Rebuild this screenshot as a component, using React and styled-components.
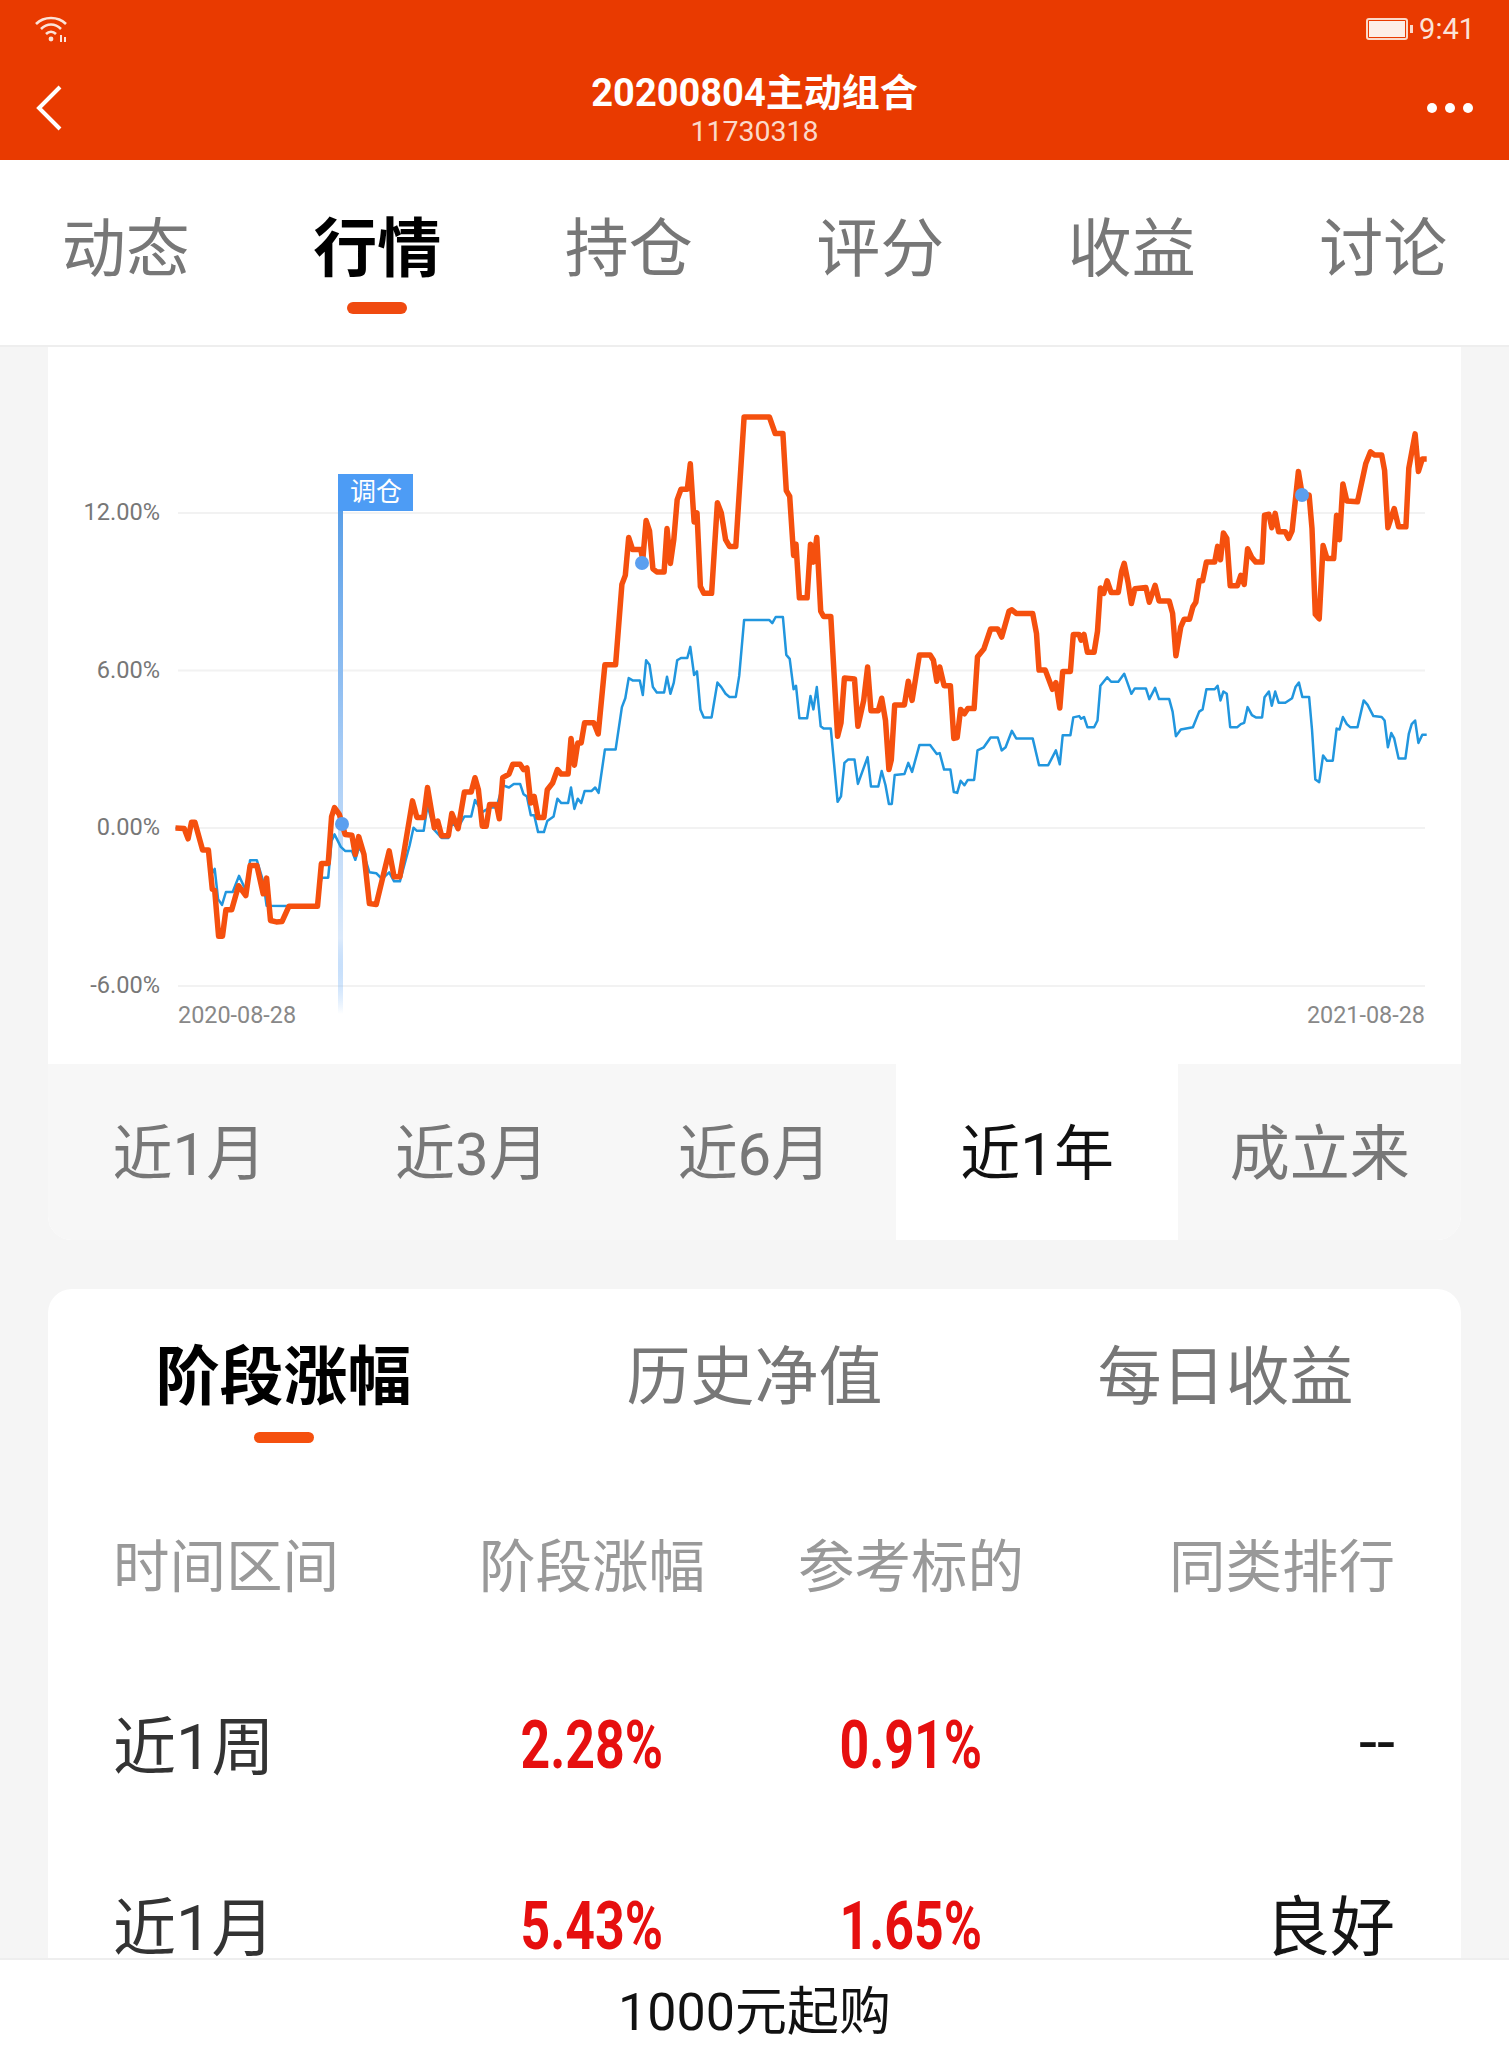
import styled, { createGlobalStyle } from "styled-components";

const GlobalStyle = createGlobalStyle`
  html, body {
    margin: 0;
    padding: 0;
    background: #f5f5f5;
  }
  body {
    font-family: Roboto, "Noto Sans CJK SC", sans-serif;
  }
`;

// traced points, left and right half of the chart
const leftX = (x) => x / 2.063;
const rightX = (x) => 750 + x / 2.066;
const toY = (y) => 350 + y / 2.24;

const toPoints = (left, right) => {
  const out = [];
  for (let i = 0; i < left.length; i += 2) {
    out.push(`${leftX(left[i]).toFixed(1)},${toY(left[i + 1]).toFixed(1)}`);
  }
  for (let i = 0; i < right.length; i += 2) {
    out.push(`${rightX(right[i]).toFixed(1)},${toY(right[i + 1]).toFixed(1)}`);
  }
  return out.join(" ");
};

const orangeLeft = [
  362,1071,380,1072,388,1095,395,1058,402,1058,418,1120,430,1120,438,1208,443,1210,451,1313,459,1313,466,1254,478,1254,492,1200,507,1222,516,1155,530,1155,543,1218,550,1183,558,1278,570,1281,582,1280,596,1246,655,1246,663,1150,677,1150,684,1045,690,1025,700,1040,712,1085,726,1087,733,1130,740,1090,751,1130,762,1240,776,1242,803,1122,813,1180,825,1180,851,1010,860,1047,874,1047,882,980,896,1070,903,1055,911,1088,925,1088,932,1038,945,1072,958,990,972,990,980,958,987,985,995,1067,1003,1067,1010,1018,1024,1018,1030,1050,1037,958,1050,950,1058,928,1073,928,1080,940,1087,936,1095,1015,1102,1000,1110,1047,1122,1047,1129,985,1140,970,1150,940,1158,950,1172,950,1178,870,1185,930,1192,880,1199,880,1206,835,1225,835,1234,860,1248,705,1270,705,1283,525,1290,505,1297,420,1305,447,1322,447,1326,470,1333,382,1340,405,1347,490,1355,497,1370,497,1376,400,1383,478,1390,425,1397,335,1405,312,1418,312,1424,255,1432,385,1438,365,1445,530,1452,545,1468,545,1480,342,1488,365,1497,425,1505,440,1518,440,1535,150,1568,150,
];

const orangeRight = [
  0,150,40,150,52,187,68,187,75,315,82,328,90,460,95,435,102,555,118,555,125,435,131,475,138,420,146,585,152,597,167,597,181,865,188,835,195,735,216,737,223,843,235,785,243,710,250,808,265,808,272,780,280,830,287,940,292,918,299,795,319,795,327,742,335,785,350,683,372,683,379,695,386,742,392,710,401,752,414,752,421,870,428,868,435,805,443,815,450,803,463,803,470,687,483,670,497,625,512,625,520,643,535,585,541,582,550,590,584,590,592,635,597,717,610,717,625,760,632,745,640,802,646,720,662,720,668,637,680,637,684,650,690,637,697,677,711,677,718,630,724,533,731,545,738,517,746,543,761,543,768,495,773,478,781,520,788,568,795,535,818,532,825,565,837,527,845,562,866,562,873,590,880,685,890,620,897,603,908,603,915,575,921,565,928,517,935,517,943,475,960,475,966,440,972,470,978,410,985,422,992,528,1007,528,1014,505,1021,525,1028,445,1037,465,1045,475,1058,475,1063,370,1072,368,1078,398,1085,366,1092,407,1106,407,1113,422,1120,405,1133,272,1141,325,1155,325,1161,400,1168,592,1176,602,1184,438,1192,467,1206,467,1212,370,1218,425,1225,300,1233,338,1255,340,1272,255,1282,228,1290,235,1305,235,1311,270,1318,398,1331,355,1340,396,1355,396,1361,265,1374,188,1381,272,1389,244,1398,244,
];

const blueLeft = [
  362,1071,380,1072,388,1095,395,1058,402,1058,418,1120,430,1120,436,1175,443,1162,450,1230,458,1243,466,1214,480,1214,493,1178,507,1210,516,1143,530,1143,543,1190,550,1245,655,1246,663,1182,677,1182,684,1100,690,1085,703,1113,712,1122,726,1122,733,1142,740,1115,751,1130,762,1170,776,1172,788,1185,803,1170,813,1190,825,1190,845,1110,853,1070,860,1077,874,1077,882,1020,896,1075,911,1093,925,1093,932,1060,945,1070,958,1045,972,1045,980,1008,995,1035,1010,1025,1024,1025,1037,975,1050,980,1060,972,1073,972,1080,995,1087,1000,1095,1042,1102,1042,1110,1080,1122,1080,1129,1055,1142,1045,1150,1005,1158,1015,1172,1015,1178,980,1185,1028,1192,1005,1199,1015,1206,988,1220,988,1228,980,1235,992,1248,895,1270,895,1283,800,1290,780,1297,735,1305,740,1320,740,1326,773,1333,695,1340,705,1347,755,1355,767,1370,767,1376,732,1383,770,1390,745,1397,695,1405,690,1418,690,1424,665,1432,728,1438,720,1445,805,1452,823,1468,823,1480,745,1488,755,1497,770,1505,777,1518,777,1525,730,1535,605,1568,605,
];

const blueRight = [
  0,605,40,605,46,612,53,598,68,598,75,683,82,692,90,760,95,752,102,825,118,825,125,775,131,805,138,755,146,843,152,848,167,848,181,1012,188,1000,195,925,203,917,216,917,223,972,243,912,250,978,265,978,272,943,280,975,287,1017,293,1017,299,952,319,950,327,925,335,945,350,885,372,885,386,905,392,903,401,940,414,940,421,990,428,992,435,965,443,975,450,963,463,963,470,897,483,890,497,868,512,868,520,897,528,890,541,853,550,870,584,870,597,930,616,930,632,897,640,928,646,863,662,863,668,823,680,820,684,826,690,822,697,845,711,845,718,830,724,752,738,733,746,743,761,743,773,725,788,770,795,758,818,758,825,782,837,757,845,782,866,782,873,810,880,865,890,850,915,845,928,810,935,805,943,760,960,760,966,752,972,785,978,765,985,770,992,845,1007,845,1014,838,1021,835,1028,800,1037,818,1045,823,1058,823,1063,778,1072,765,1078,797,1085,765,1092,790,1106,790,1120,780,1127,755,1134,745,1141,777,1155,777,1161,850,1168,962,1176,968,1184,908,1192,920,1204,920,1212,848,1218,850,1225,822,1233,838,1240,845,1255,845,1268,785,1276,795,1288,820,1305,822,1311,830,1318,890,1325,858,1331,870,1340,915,1354,915,1361,860,1367,838,1374,830,1381,880,1389,862,1398,862,
];

const gridLines = [
  { label: "12.00%", y: 513 },
  { label: "6.00%", y: 670.5 },
  { label: "0.00%", y: 828 },
  { label: "-6.00%", y: 986 },
];

const mainTabs = ["动态", "行情", "持仓", "评分", "收益", "讨论"];
const ranges = ["近1月", "近3月", "近6月", "近1年", "成立来"];
const subTabs = ["阶段涨幅", "历史净值", "每日收益"];
const rows = [
  { name: "近1周", gain: "2.28%", ref: "0.91%", rank: "--" },
  { name: "近1月", gain: "5.43%", ref: "1.65%", rank: "良好" },
];

const Chart = () => (
  <ChartSvg viewBox="48 347 1413 717">
    <defs>
      <linearGradient id="flagLine" x1="0" y1="0" x2="0" y2="1">
        <stop offset="0" stopColor="#5a9fe8" />
        <stop offset="0.5" stopColor="#a9cdf6" />
        <stop offset="0.85" stopColor="#dceafb" />
        <stop offset="1" stopColor="#4d9cf5" stopOpacity="0" />
      </linearGradient>
    </defs>
    {gridLines.map((line) => (
      <g key={line.label}>
        <line x1="178" x2="1425" y1={line.y} y2={line.y} stroke="#f2f2f2" strokeWidth="2" />
        <AxisText x="160" y={line.y + 7} textAnchor="end">
          {line.label}
        </AxisText>
      </g>
    ))}
    <DateText x="178" y="1023">2020-08-28</DateText>
    <DateText x="1425" y="1023" textAnchor="end">2021-08-28</DateText>
    <rect x="338" y="511" width="5" height="503" fill="url(#flagLine)" />
    <polyline points={toPoints(blueLeft, blueRight)} fill="none" stroke="#2196de" strokeWidth="2.5" strokeLinejoin="round" />
    <polyline points={toPoints(orangeLeft, orangeRight)} fill="none" stroke="#f5500e" strokeWidth="5.5" strokeLinejoin="round" />
    <rect x="338" y="474" width="75" height="37" fill="#4d9cf5" />
    <FlagText x="376" y="501" textAnchor="middle">调仓</FlagText>
    <circle cx="342" cy="824" r="7" fill="#5b9fef" />
    <circle cx="642" cy="563" r="7" fill="#5b9fef" />
    <circle cx="1302" cy="495" r="7" fill="#5b9fef" />
  </ChartSvg>
);

const App = () => {
  return (
    <Page>
      <GlobalStyle />
      <Header>
        <StatusBar>
          <svg width="34" height="28" viewBox="0 0 34 28" fill="none" stroke="#fbe3d8" strokeWidth="2.6">
            <path d="M2 9 C10 1 24 1 32 9" />
            <path d="M7 14 C13 8 21 8 27 14" />
            <path d="M12 19 C15 16 19 16 22 19" />
            <circle cx="17" cy="24" r="2.4" fill="#fbe3d8" stroke="none" />
            <path d="M27 20 V27 M31 22 V27" strokeWidth="2" />
          </svg>
          <StatusRight>
            <svg width="47" height="22" viewBox="0 0 47 22">
              <rect x="1" y="1" width="40" height="20" rx="2" fill="none" stroke="#fbd9c9" strokeWidth="2" />
              <rect x="3" y="3" width="36" height="16" fill="#fdeee7" />
              <rect x="44" y="7" width="3" height="8" fill="#fbd9c9" />
            </svg>
            <StatusTime>9:41</StatusTime>
          </StatusRight>
        </StatusBar>
        <NavBar>
          <BackIcon width="26" height="46" viewBox="0 0 26 46" fill="none" stroke="#fff" strokeWidth="4">
            <path d="M24 2 L3 23 L24 44" />
          </BackIcon>
          <TitleBlock>
            <Title>20200804主动组合</Title>
            <SubTitle>11730318</SubTitle>
          </TitleBlock>
          <Dots>
            <Dot />
            <Dot />
            <Dot />
          </Dots>
        </NavBar>
      </Header>

      <MainTabs>
        {mainTabs.map((tab) => (
          <MainTab key={tab} $active={tab === "行情"}>
            {tab}
            {tab === "行情" && <TabMark />}
          </MainTab>
        ))}
      </MainTabs>

      <Content>
        <ChartCard>
          <Chart />
          <RangeBar>
            {ranges.map((range) => (
              <RangeItem key={range} $active={range === "近1年"}>
                {range}
              </RangeItem>
            ))}
          </RangeBar>
        </ChartCard>

        <TableCard>
          <SubTabs>
            {subTabs.map((tab) => (
              <SubTab key={tab} $active={tab === "阶段涨幅"}>
                {tab}
                {tab === "阶段涨幅" && <SubTabMark />}
              </SubTab>
            ))}
          </SubTabs>
          <TableRow>
            <HeadCell>时间区间</HeadCell>
            <HeadCell $center>阶段涨幅</HeadCell>
            <HeadCell $center>参考标的</HeadCell>
            <HeadCell $right>同类排行</HeadCell>
          </TableRow>
          {rows.map((row) => (
            <TableRow key={row.name}>
              <NameCell>{row.name}</NameCell>
              <ValueCell>
                <Percent>{row.gain}</Percent>
              </ValueCell>
              <ValueCell>
                <Percent>{row.ref}</Percent>
              </ValueCell>
              <RankCell>{row.rank}</RankCell>
            </TableRow>
          ))}
        </TableCard>
      </Content>

      <Footer>1000元起购</Footer>
    </Page>
  );
};

export default App;

const Page = styled.div`
  display: flex;
  flex-direction: column;
  width: 1509px;
  height: 2048px;
  overflow: hidden;
  background: #f5f5f5;
`;

const Header = styled.header`
  flex: none;
  height: 160px;
  background: #e93a00;
  color: #fff;
`;

const StatusBar = styled.div`
  display: flex;
  align-items: center;
  justify-content: space-between;
  height: 58px;
  padding: 0 34px;
`;

const StatusRight = styled.div`
  display: flex;
  align-items: center;
  gap: 6px;
`;

const StatusTime = styled.span`
  font-size: 29px;
  color: #fbe3d8;
`;

const NavBar = styled.div`
  display: grid;
  grid-template-columns: 1fr auto 1fr;
  align-items: center;
  height: 102px;
  padding: 0 36px;
`;

const BackIcon = styled.svg`
  margin-top: -3px;
`;

const TitleBlock = styled.div`
  display: flex;
  flex-direction: column;
  align-items: center;
`;

const Title = styled.div`
  font-size: 38px;
  font-weight: 700;
  line-height: 46px;
`;

const SubTitle = styled.div`
  font-size: 28.5px;
  line-height: 32px;
  color: #fbd9c9;
`;

const Dots = styled.div`
  display: flex;
  justify-content: flex-end;
  gap: 8px;
  margin-top: -2px;
`;

const Dot = styled.span`
  width: 10px;
  height: 10px;
  border-radius: 50%;
  background: #fff;
`;

const MainTabs = styled.nav`
  flex: none;
  display: grid;
  grid-template-columns: repeat(6, 1fr);
  height: 185px;
  background: #fff;
  border-bottom: 2px solid #eee;
`;

const MainTab = styled.div`
  position: relative;
  padding-top: 53px;
  text-align: center;
  font-size: 64px;
  line-height: 74px;
  font-weight: ${(p) => (p.$active ? 700 : 400)};
  color: ${(p) => (p.$active ? "#000" : "#777")};
`;

const TabMark = styled.span`
  position: absolute;
  left: 50%;
  top: 142px;
  width: 60px;
  height: 12px;
  margin-left: -30px;
  border-radius: 6px;
  background: #f04a10;
`;

const Content = styled.main`
  flex: 1;
  min-height: 0;
  overflow: hidden;
  padding: 0 48px;
`;

const ChartCard = styled.section`
  border-radius: 0 0 24px 24px;
  overflow: hidden;
  background: #fff;
`;

const ChartSvg = styled.svg`
  display: block;
  width: 1413px;
  height: 717px;
`;

const AxisText = styled.text`
  font-size: 23.6px;
  fill: #777;
`;

const DateText = styled.text`
  font-size: 23.4px;
  fill: #888;
`;

const FlagText = styled.text`
  font-size: 26px;
  fill: #fff;
`;

const RangeBar = styled.div`
  display: grid;
  grid-template-columns: repeat(5, 1fr);
  height: 176px;
  background: #f7f7f7;
`;

const RangeItem = styled.div`
  display: flex;
  align-items: center;
  justify-content: center;
  padding-bottom: 8px;
  font-size: 60px;
  background: ${(p) => (p.$active ? "#fff" : "transparent")};
  color: ${(p) => (p.$active ? "#111" : "#777")};
`;

const TableCard = styled.section`
  margin-top: 49px;
  padding: 0 66px 40px 65px;
  border-radius: 24px 24px 0 0;
  background: #fff;
`;

const SubTabs = styled.div`
  display: grid;
  grid-template-columns: repeat(3, 1fr);
  height: 187px;
  margin: 0 -66px 0 -65px;
`;

const SubTab = styled.div`
  position: relative;
  padding-top: 52px;
  text-align: center;
  font-size: 64px;
  line-height: 74px;
  font-weight: ${(p) => (p.$active ? 700 : 400)};
  color: ${(p) => (p.$active ? "#000" : "#777")};
`;

const SubTabMark = styled.span`
  position: absolute;
  left: 50%;
  top: 143px;
  width: 60px;
  height: 11px;
  margin-left: -30px;
  border-radius: 6px;
  background: #f5500e;
`;

const TableRow = styled.div`
  display: grid;
  grid-template-columns: 319.5px 319px 319px 1fr;
  align-items: center;
  height: 180.5px;
`;

const HeadCell = styled.div`
  padding-bottom: 8px;
  font-size: 56.5px;
  color: #999;
  text-align: ${(p) => (p.$center ? "center" : p.$right ? "right" : "left")};
`;

const NameCell = styled.div`
  padding-bottom: 10px;
  font-size: 63px;
  color: #333;
`;

const ValueCell = styled.div`
  padding-bottom: 2px;
  text-align: center;
`;

const Percent = styled.span`
  display: inline-block;
  font-size: 66px;
  font-weight: 700;
  color: #e60f0f;
  transform: scaleX(0.785);
`;

const RankCell = styled.div`
  padding-bottom: 10px;
  font-size: 65px;
  color: #151515;
  text-align: right;
`;

const Footer = styled.footer`
  flex: none;
  display: flex;
  align-items: center;
  justify-content: center;
  height: 90px;
  padding-top: 6px;
  box-sizing: border-box;
  border-top: 2px solid #eee;
  background: #fff;
  font-size: 52px;
  color: #111;
`;
